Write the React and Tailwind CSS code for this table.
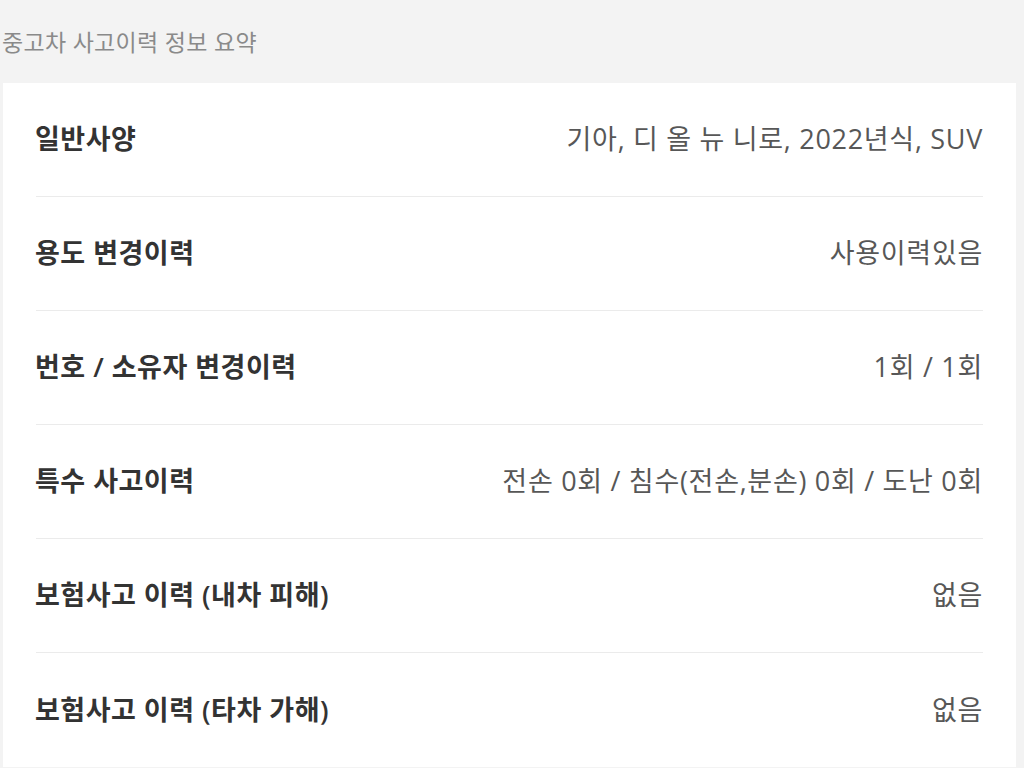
const rows = [
  { label: '일반사양', value: '기아, 디 올 뉴 니로, 2022년식, SUV' },
  { label: '용도 변경이력', value: '사용이력있음' },
  { label: '번호 / 소유자 변경이력', value: '1회 / 1회' },
  { label: '특수 사고이력', value: '전손 0회 / 침수(전손,분손) 0회 / 도난 0회' },
  { label: '보험사고 이력 (내차 피해)', value: '없음' },
  { label: '보험사고 이력 (타차 가해)', value: '없음' },
];

export default function App() {
  return (
    <div
      className="h-[768px] w-[1024px] overflow-hidden bg-[#f3f3f3]"
      style={{ fontFamily: '"Open Sans", "Noto Sans CJK KR", sans-serif' }}
    >
      {/* Title */}
      <div className="h-[83px] pl-[2px] pt-[27px] text-[23px] leading-[30px] tracking-[0.3px] text-[#8a8a8a]">
        중고차 사고이력 정보 요약
      </div>

      {/* Summary card */}
      <div className="ml-[3px] w-[1013px] bg-white px-[33px]">
        {rows.map((row, i) => (
          <div
            key={row.label}
            className={
              'flex h-[114px] items-center justify-between ' +
              (i < rows.length - 1 ? 'border-b border-[#ebebeb]' : '')
            }
          >
            <span className="-ml-[1px] text-[27px] font-semibold tracking-[0.5px] text-[#333333]">
              {row.label}
            </span>
            <span className="text-[27px] tracking-[0.7px] text-[#575757]">{row.value}</span>
          </div>
        ))}
      </div>
    </div>
  );
}
